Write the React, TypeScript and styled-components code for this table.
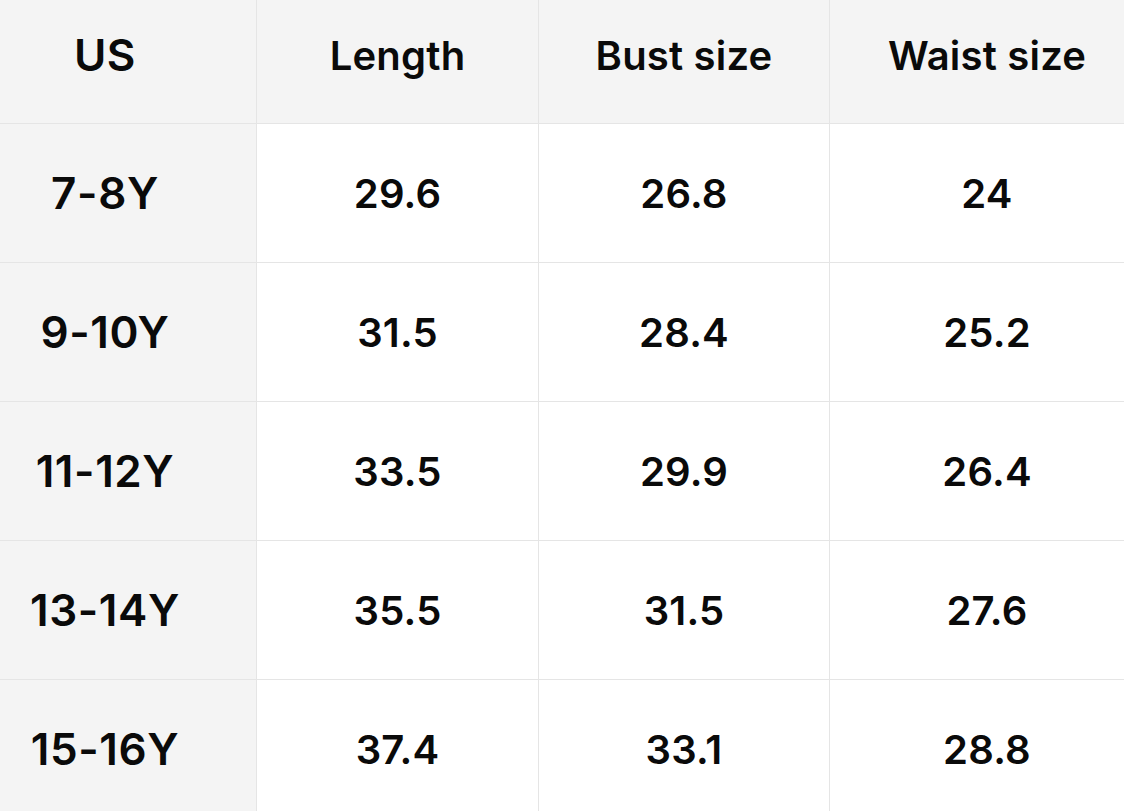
import React from "react";
import styled, { createGlobalStyle } from "styled-components";

const GlobalStyle = createGlobalStyle`
  html, body {
    margin: 0;
    padding: 0;
    background: #ffffff;
  }
  body {
    font-family: Inter, "Noto Sans", "Liberation Sans", sans-serif;
    -webkit-font-smoothing: antialiased;
  }
`;

const Viewport = styled.div`
  width: 1124px;
  height: 811px;
  overflow: hidden;
  background: #ffffff;
`;

const Table = styled.div`
  display: grid;
  grid-template-columns: 302px 281px 290px 314px;
  grid-auto-rows: 138px;
  grid-template-rows: 136px;
  gap: 1px;
  background: #e5e5e5;
  width: max-content;
  margin: -13px 0 0 -46px;
`;

const Cell = styled.div<{ $shade?: boolean; $lead?: boolean }>`
  display: flex;
  align-items: center;
  justify-content: center;
  background: ${(p) => (p.$shade ? "#f4f4f4" : "#ffffff")};
  color: #0a0a0a;
  font-size: ${(p) => (p.$lead ? "44px" : "40px")};
  font-weight: 600;
  letter-spacing: ${(p) => (p.$lead ? "0.6px" : "0.2px")};
  white-space: nowrap;
`;

const headers = ["US", "Length", "Bust size", "Waist size"];

const rows = [
  ["7-8Y", "29.6", "26.8", "24"],
  ["9-10Y", "31.5", "28.4", "25.2"],
  ["11-12Y", "33.5", "29.9", "26.4"],
  ["13-14Y", "35.5", "31.5", "27.6"],
  ["15-16Y", "37.4", "33.1", "28.8"],
];

export default function App() {
  return (
    <>
      <GlobalStyle />
      <Viewport>
        <Table>
          {headers.map((h, i) => (
            <Cell key={h} $shade $lead={i === 0}>
              {h}
            </Cell>
          ))}
          {rows.map((r) =>
            r.map((v, i) => (
              <Cell key={r[0] + i} $shade={i === 0} $lead={i === 0}>
                {v}
              </Cell>
            ))
          )}
        </Table>
      </Viewport>
    </>
  );
}
